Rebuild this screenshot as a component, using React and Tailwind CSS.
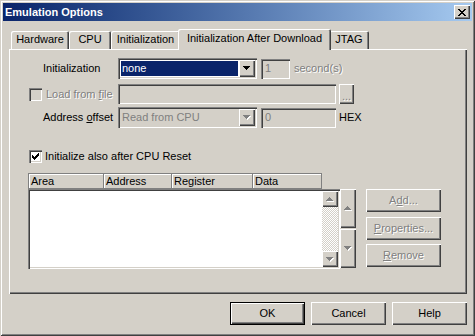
import React from "react";

const RAISED =
  "shadow-[inset_1px_1px_0_#ffffff,inset_-1px_-1px_0_#404040,inset_-2px_-2px_0_#808080]";
const SUNKEN =
  "shadow-[inset_1px_1px_0_#808080,inset_2px_2px_0_#404040,inset_-1px_-1px_0_#ffffff,inset_-2px_-2px_0_#d4d0c8]";
const DIS = "text-[#808080] [text-shadow:1px_1px_0_#ffffff]";

function Arrow({ dir = "down", disabled = false }) {
  const rows = dir === "down" ? [0, 1, 2, 3] : [3, 2, 1, 0];
  const rects = (fill, dx, dy) =>
    rows.map((r, i) => (
      <rect key={fill + i} x={r + dx} y={i + dy} width={7 - 2 * r} height={1} fill={fill} />
    ));
  return (
    <svg width="8" height="5" viewBox="0 0 8 5" shapeRendering="crispEdges">
      {disabled && rects("#ffffff", 1, 1)}
      {rects(disabled ? "#808080" : "#000000", 0, 0)}
    </svg>
  );
}

function Check() {
  const cols = [2, 3, 4, 3, 2, 1, 0];
  return (
    <svg width="7" height="7" viewBox="0 0 7 7" shapeRendering="crispEdges">
      {cols.map((y, x) => (
        <rect key={x} x={x} y={y} width={1} height={3} fill="#000" />
      ))}
    </svg>
  );
}

function CloseGlyph() {
  const pat = [
    "XX....XX",
    ".XX..XX.",
    "..XXXX..",
    "...XX...",
    "..XXXX..",
    ".XX..XX.",
    "XX....XX",
  ];
  const rects = [];
  pat.forEach((row, y) =>
    row.split("").forEach((c, x) => {
      if (c === "X") rects.push(<rect key={x + "-" + y} x={x} y={y} width={1} height={1} fill="#000" />);
    })
  );
  return (
    <svg width="8" height="7" viewBox="0 0 8 7" shapeRendering="crispEdges">
      {rects}
    </svg>
  );
}

function CheckBox({ checked, disabled }) {
  return (
    <div
      className={
        "w-[13px] h-[13px] shrink-0 flex items-center justify-center " +
        SUNKEN +
        (disabled ? " bg-[#d4d0c8]" : " bg-white")
      }
    >
      {checked && <Check />}
    </div>
  );
}

function Tab({ label, w, selected }) {
  if (selected) {
    return (
      <div
        className={
          "relative z-10 h-[21px] -mx-[2px] bg-[#d4d0c8] flex items-start justify-center pt-[3px] rounded-tl-[2px] rounded-tr-[2px] shadow-[inset_1px_1px_0_#ffffff,inset_-1px_0_0_#404040,inset_-2px_0_0_#808080]"
        }
        style={{ width: w + 4 }}
      >
        {label}
      </div>
    );
  }
  return (
    <div
      className="mt-[2px] h-[18px] bg-[#d4d0c8] flex items-center justify-center pb-[1px] rounded-tl-[2px] rounded-tr-[2px] shadow-[inset_1px_1px_0_#ffffff,inset_-1px_0_0_#404040,inset_-2px_0_0_#808080]"
      style={{ width: w }}
    >
      {label}
    </div>
  );
}

function Button({ children, disabled, def, className = "" }) {
  if (def) {
    return (
      <div className={"w-[75px] h-[23px] border border-black bg-[#d4d0c8] " + className}>
        <div className={"w-full h-full flex items-center justify-center " + RAISED}>{children}</div>
      </div>
    );
  }
  return (
    <div
      className={
        "w-[75px] h-[23px] bg-[#d4d0c8] flex items-center justify-center " +
        RAISED +
        " " +
        (disabled ? DIS : "") +
        " " +
        className
      }
    >
      {children}
    </div>
  );
}

function Combo({ value, disabled, selected }) {
  return (
    <div
      className={
        "w-[139px] h-[21px] p-[2px] flex " + SUNKEN + (disabled ? " bg-[#d4d0c8]" : " bg-white")
      }
    >
      <div className="flex-1 flex">
        {selected ? (
          <div className="flex-1 m-[1px] bg-[#0a246a] text-white flex items-center pl-[1px]">{value}</div>
        ) : (
          <div className={"flex-1 m-[1px] flex items-center pl-[1px] " + (disabled ? "text-[#808080]" : "")}>
            {value}
          </div>
        )}
      </div>
      <div className={"w-[16px] bg-[#d4d0c8] flex items-center justify-center " + RAISED}>
        <Arrow dir="down" disabled={disabled} />
      </div>
    </div>
  );
}

function Edit({ w, value }) {
  return (
    <div
      className={"h-[20px] bg-[#d4d0c8] flex items-center pl-[4px] text-[#808080] " + SUNKEN}
      style={{ width: w }}
    >
      {value}
    </div>
  );
}

function ScrollBtn({ dir }) {
  return (
    <div className={"w-[16px] h-[16px] bg-[#d4d0c8] flex items-center justify-center " + RAISED}>
      <Arrow dir={dir} disabled />
    </div>
  );
}

export default function App() {
  return (
    <div
      className={
        "w-[475px] h-[336px] overflow-hidden bg-[#d4d0c8] text-[11px] leading-[13px] text-black font-['Liberation_Sans',Arial,sans-serif] flex flex-col shadow-[inset_1px_1px_0_#d4d0c8,inset_-1px_-1px_0_#404040,inset_2px_2px_0_#ffffff,inset_-2px_-2px_0_#808080]"
      }
    >
      {/* Title bar */}
      <div className="mx-[3px] mt-[3px] h-[18px] bg-linear-to-r from-[#0a246a] to-[#a6caf0] flex items-center justify-between pl-[2px] pr-[2px]">
        <span className="text-white font-bold">Emulation Options</span>
        <div className={"w-[16px] h-[14px] bg-[#d4d0c8] flex items-center justify-center pr-[1px] " + RAISED}>
          <CloseGlyph />
        </div>
      </div>

      {/* Tabs */}
      <div className="mt-[8px] ml-[9px] mr-[8px] h-[20px] flex items-start pl-[2px]">
        <Tab label="Hardware" w={58} />
        <Tab label="CPU" w={42} />
        <Tab label="Initialization" w={69} />
        <Tab label="Initialization After Download" w={149} selected />
        <Tab label="JTAG" w={40} />
      </div>

      {/* Panel */}
      <div
        className={
          "ml-[9px] mr-[8px] h-[245px] flex flex-col pt-[9px] shadow-[inset_1px_1px_0_#ffffff,inset_-1px_-1px_0_#404040,inset_-2px_-2px_0_#808080]"
        }
      >
        {/* Row 1 */}
        <div className="h-[21px] flex items-center ml-[34px]">
          <div className="w-[75px]">Initialization</div>
          <Combo value="none" selected />
          <div className="ml-[4px]">
            <Edit w={29} value="1" />
          </div>
          <div className={"ml-[4px] " + DIS}>second(s)</div>
        </div>

        {/* Row 2 */}
        <div className="mt-[5px] h-[20px] flex items-center ml-[20px]">
          <CheckBox disabled />
          <div className={"ml-[4px] w-[72px] " + DIS}>
            Load from <span className="underline">f</span>ile
          </div>
          <div className={"w-[218px] h-[20px] bg-[#d4d0c8] " + SUNKEN} />
          <div
            className={
              "ml-[3px] w-[15px] h-[20px] bg-[#d4d0c8] flex items-end justify-center pb-[4px] leading-[8px] " +
              RAISED +
              " " +
              DIS
            }
          >
            ...
          </div>
        </div>

        {/* Row 3 */}
        <div className="mt-[3px] h-[21px] flex items-center ml-[34px]">
          <div className="w-[75px]">
            Address <span className="underline">o</span>ffset
          </div>
          <Combo value="Read from CPU" disabled />
          <div className="ml-[4px]">
            <Edit w={75} value="0" />
          </div>
          <div className="ml-[3px]">HEX</div>
        </div>

        {/* Row 4 */}
        <div className="mt-[22px] h-[13px] flex items-center ml-[20px]">
          <CheckBox checked />
          <div className="ml-[3px]">Initialize also after CPU Reset</div>
        </div>

        {/* List block */}
        <div className="mt-[10px] ml-[19px] flex flex-col">
          <div className="w-[294px] h-[16px] flex border-t border-l border-[#808080]">
            <div className="w-[75px] h-full pl-[2px] flex items-center border-r border-b border-[#808080] shadow-[inset_1px_1px_0_#ffffff]">
              Area
            </div>
            <div className="w-[68px] h-full pl-[2px] flex items-center border-r border-b border-[#808080] shadow-[inset_1px_1px_0_#ffffff]">
              Address
            </div>
            <div className="w-[81px] h-full pl-[2px] flex items-center border-r border-b border-[#808080] shadow-[inset_1px_1px_0_#ffffff]">
              Register
            </div>
            <div className="w-[69px] h-full pl-[2px] flex items-center border-r border-b border-[#808080] shadow-[inset_1px_1px_0_#ffffff]">
              Data
            </div>
          </div>

          <div className="flex items-start">
            <div className={"w-[312px] h-[80px] p-[2px] flex bg-white " + SUNKEN}>
              <div className="flex-1 bg-white" />
              <div className="w-[16px] flex flex-col">
                <ScrollBtn dir="up" />
                <div className="flex-1 bg-[repeating-conic-gradient(#ffffff_0_25%,#d4d0c8_0_50%)] bg-[length:2px_2px]" />
                <ScrollBtn dir="down" />
              </div>
            </div>

            <div className="w-[16px] flex flex-col">
              <div className={"h-[39px] bg-[#d4d0c8] flex items-center justify-center " + RAISED}>
                <Arrow dir="up" disabled />
              </div>
              <div className={"mt-[1px] h-[39px] bg-[#d4d0c8] flex items-center justify-center " + RAISED}>
                <Arrow dir="down" disabled />
              </div>
            </div>

            <div className="ml-[10px] flex flex-col">
              <Button disabled>
                A<span className="underline">d</span>d...
              </Button>
              <Button disabled className="mt-[5px]">
                <span className="underline">P</span>roperties...
              </Button>
              <Button disabled className="mt-[4px]">
                <span className="underline">R</span>emove
              </Button>
            </div>
          </div>
        </div>
      </div>

      {/* Bottom buttons */}
      <div className="mt-[8px] flex justify-end gap-[6px] pr-[8px]">
        <Button def>OK</Button>
        <Button>Cancel</Button>
        <Button>Help</Button>
      </div>
    </div>
  );
}
